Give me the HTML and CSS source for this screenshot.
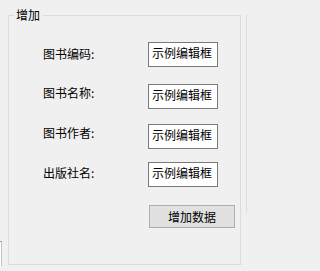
FILE: index.html
```html
<!DOCTYPE html>
<html lang="zh-CN">
<head>
<meta charset="utf-8">
<title>增加</title>
<link rel="stylesheet" href="styles.css">
</head>
<body>
  <div class="sliver-left"></div>
  <section class="group">
    <span class="group-title">增加</span>
    <div class="form">
      <div class="labels">
        <div class="label l1">图书编码:</div>
        <div class="label l2">图书名称:</div>
        <div class="label l3">图书作者:</div>
        <div class="label l4">出版社名:</div>
      </div>
      <div class="fields">
        <div class="edit e1">示例编辑框</div>
        <div class="edit e2">示例编辑框</div>
        <div class="edit e3">示例编辑框</div>
        <div class="edit e4">示例编辑框</div>
        <button class="btn" type="button">增加数据</button>
      </div>
    </div>
  </section>
  <div class="sliver-right"></div>
</body>
</html>
```

FILE: styles.css
```css
html, body {
  margin: 0;
  padding: 0;
}
body {
  width: 247px;
  height: 271px;
  overflow: hidden;
  background: #f0f0f0;
  display: flex;
  align-items: flex-start;
  font-family: "Noto Sans CJK SC", "Noto Sans", sans-serif;
  font-size: 12px;
  line-height: 14px;
  color: #000;
}
.sliver-left {
  width: 1px;
  height: 24px;
  margin-top: 241px;
  background: #fff;
  border-top: 1px solid #9a9a9a;
  border-right: 1px solid #c4c4c4;
}
.group {
  position: relative;
  box-sizing: border-box;
  width: 233px;
  height: 250px;
  margin: 15px 0 0 6px;
  border: 1px solid #dcdcdc;
}
.group-title {
  position: absolute;
  top: -8px;
  left: 5px;
  padding: 0 3px 0 2px;
  background: #f0f0f0;
}
.sliver-right {
  width: 0;
  height: 198px;
  margin: 15px 0 0 5px;
  border-left: 1px solid #dcdcdc;
}
.form {
  display: flex;
  padding-left: 34px;
}
.labels {
  width: 105px;
  padding-top: 31px;
  display: flex;
  flex-direction: column;
}
.label {
  white-space: nowrap;
}
.l2 { margin-top: 25px; }
.l3 { margin-top: 26px; }
.l4 { margin-top: 26px; }
.fields {
  padding-top: 26px;
  display: flex;
  flex-direction: column;
  align-items: flex-start;
}
.edit {
  box-sizing: border-box;
  width: 70px;
  height: 25px;
  padding: 3px 0 0 3px;
  background: #fff;
  border: 1px solid #7a7a7a;
  white-space: nowrap;
  overflow: hidden;
}
.e2 { margin-top: 17px; }
.e3 { margin-top: 15px; }
.e4 { margin-top: 13px; }
.btn {
  box-sizing: border-box;
  width: 86px;
  height: 23px;
  margin: 18px 0 0 1px;
  padding: 0;
  background: #e1e1e1;
  border: 1px solid #adadad;
  border-radius: 0;
  font-family: inherit;
  font-size: 12px;
  line-height: 14px;
  color: #000;
}
```
